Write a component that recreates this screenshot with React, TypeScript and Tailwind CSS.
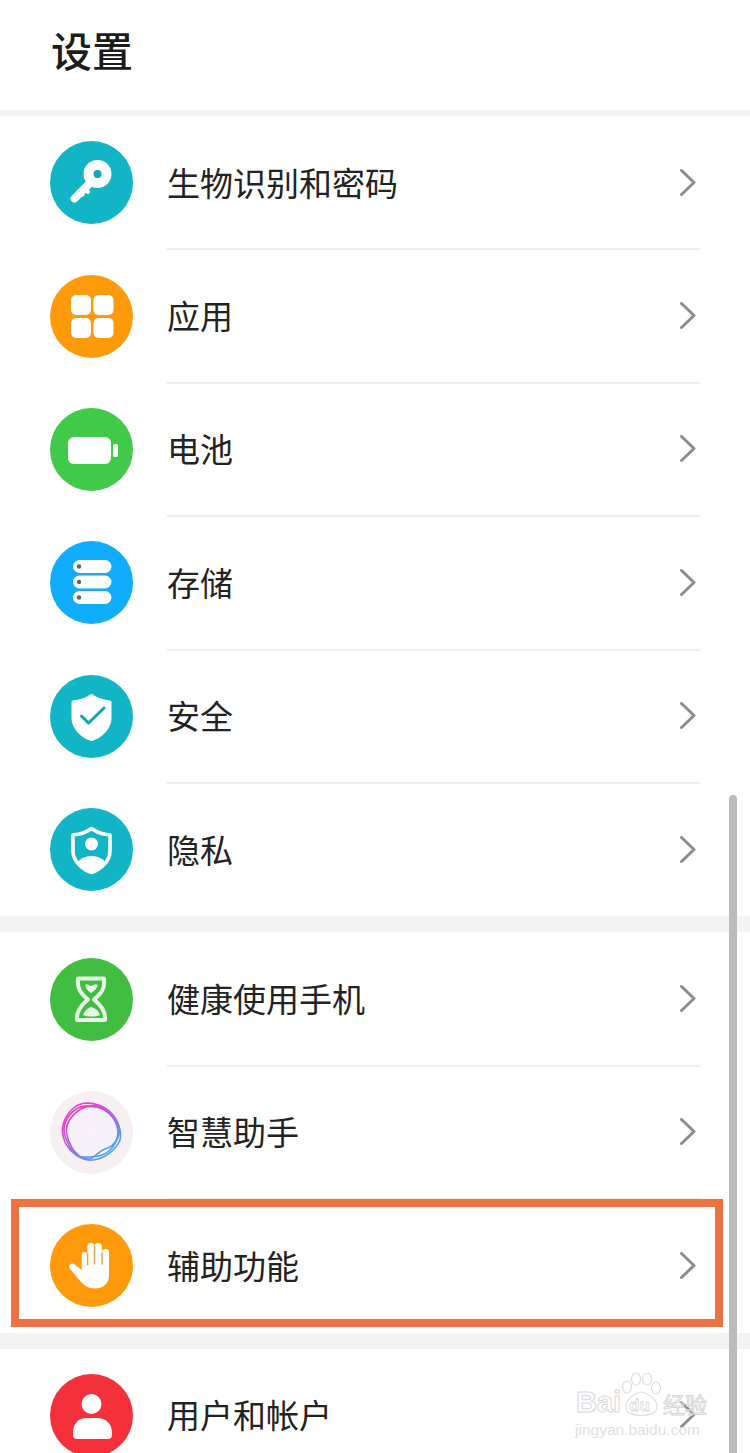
import React from "react";

const W = "#ffffff";

function Circle({ color, children }: { color: string; children?: React.ReactNode }) {
  return (
    <svg width="83" height="83" viewBox="0 0 83 83" className="shrink-0 block">
      <circle cx="41.5" cy="41.5" r="41.5" fill={color} />
      {children}
    </svg>
  );
}

const KeyIcon = () => (
  <Circle color="#12B5C6">
    <circle cx="47.5" cy="33" r="14" fill={W} />
    <circle cx="47.5" cy="33" r="4" fill="#12A5B5" />
    <path d="M40 42 L24.5 57.5" stroke={W} strokeWidth="8" strokeLinecap="round" />
    <path d="M33 46 l5 5 M29 50 l3.5 3.5" stroke={W} strokeWidth="4" strokeLinecap="round" />
  </Circle>
);

const AppsIcon = () => (
  <Circle color="#FF9A0A">
    <rect x="21" y="20" width="20" height="20" rx="5" fill={W} />
    <rect x="43.5" y="20" width="20" height="20" rx="5" fill={W} />
    <rect x="21" y="43" width="20" height="20" rx="5" fill={W} />
    <rect x="43.5" y="43" width="20" height="20" rx="5" fill={W} />
  </Circle>
);

const BatteryIcon = () => (
  <Circle color="#41C94A">
    <rect x="18" y="29" width="43" height="27" rx="6" fill={W} />
    <rect x="63" y="36" width="5" height="13" rx="1.5" fill={W} />
  </Circle>
);

const StorageIcon = () => (
  <Circle color="#0FADFB">
    {[19, 34.5, 50].map((y) => (
      <g key={y}>
        <rect x="23" y={y} width="38.5" height="13" rx="6.5" fill={W} />
        <circle cx="29" cy={y + 6.5} r="2.2" fill="#4D6B80" />
      </g>
    ))}
  </Circle>
);

const shield = "M41.5 20.5 C47 24.5 53 26.5 60 27 L60 43 C60 53 51 61.5 41.5 64.5 C32 61.5 23 53 23 43 L23 27 C30 26.5 36 24.5 41.5 20.5 Z";

const ShieldCheckIcon = () => (
  <Circle color="#12B5C6">
    <path d={shield} fill={W} stroke={W} strokeWidth="3" strokeLinejoin="round" />
    <path d="M31.5 41 L38.5 48 L54 33" fill="none" stroke="#12A5B5" strokeWidth="3" strokeLinecap="round" strokeLinejoin="round" />
  </Circle>
);

const PrivacyIcon = () => (
  <Circle color="#12B5C6">
    <defs>
      <clipPath id="privacy-shield">
        <path d={shield} />
      </clipPath>
    </defs>
    <circle cx="41.5" cy="36" r="6.5" fill={W} />
    <g clipPath="url(#privacy-shield)">
      <ellipse cx="41.5" cy="60" rx="16" ry="12" fill={W} />
    </g>
    <path d={shield} fill="none" stroke={W} strokeWidth="3.6" strokeLinejoin="round" />
  </Circle>
);

const HourglassIcon = () => (
  <Circle color="#41BE41">
    <path
      d="M28 20.5 H54 C55 30 52 35 44 41.5 C52 48 56 54 55 62 H27 C26 54 30 48 38 41.5 C30 35 27 30 28 20.5 Z"
      fill="none"
      stroke="#E6F8E4"
      strokeWidth="4"
      strokeLinejoin="round"
    />
    <path d="M35 27 C38 25 39 28 41 28 C43 28 45 25 48 27 C47 31 44 33 41 35 C38 33 36 31 35 27 Z" fill="#E6F8E4" />
    <path d="M33 57 C35 52 38 50 41 49 C45 50 48 52 50 57 C45 59 38 59 33 57 Z" fill="#E6F8E4" />
  </Circle>
);

const AssistantIcon = () => (
  <Circle color="#F6F0F3">
    <defs>
      <linearGradient id="ring" x1="0.2" y1="0.1" x2="0.8" y2="0.9">
        <stop offset="0" stopColor="#F03BC4" />
        <stop offset="0.5" stopColor="#A764E6" />
        <stop offset="1" stopColor="#45A5F5" />
      </linearGradient>
      <radialGradient id="core">
        <stop offset="0" stopColor="#FCEFFB" />
        <stop offset="1" stopColor="#F3F2FC" />
      </radialGradient>
    </defs>
    <circle cx="42" cy="41" r="26" fill="url(#core)" />
    <g fill="none" stroke="url(#ring)" strokeWidth="1.6">
      <path d="M12.5 37 C14 27 22 14 33 12.5 C43 11 55 15 61 22 C68 29 72 40 70 49 C66 59 54 68 43 69 C32 70 20 62 15 51 C13 46 12 42 12.5 37 Z" />
      <path d="M15 32 C20 21 28 14 40 15 C50 13 64 21 68 33 C72 43 66 55 55 58 C49 60 47 65 40 68 C29 68 21 61 18 52 C14 45 13 38 15 32 Z" />
      <path d="M16.5 42 C15 31 25 19 36 16 C49 13 60 21 65 30 C71 41 67 52 60 59 C52 67 41 66 31 66 C24 62 18 52 16.5 42 Z" />
    </g>
  </Circle>
);

const HandIcon = () => (
  <Circle color="#FF9A0A">
    <path
      d="M31.7 31 C31.7 27 37.4 27 37.4 31 V21.5 C37.4 18 44.4 18 44.4 21.5 V21.5 C44.4 18 51.8 18 51.8 21.5 V28 C51.8 24 59 24 59 28 V52 C59 60 52 64.5 45 64.5 C37 64.5 32.5 60 29 55.5 L20 45 C17.5 41.5 21 38 24 40 L31.7 46 Z"
      fill={W}
    />
    <path d="M37.6 30 V41 M44.5 22 V40 M52 29 V40" stroke="#E8A44A" strokeWidth="1.5" strokeLinecap="round" />
  </Circle>
);

const UserIcon = () => (
  <Circle color="#F4303A">
    <circle cx="41.5" cy="30" r="10" fill={W} />
    <path d="M37 44 H47 C56 44 62 50 62 59 V61 C62 63.5 60.5 65 58 65 H27 C24.5 65 23 63.5 23 61 V59 C23 50 28 44 37 44 Z" fill={W} />
  </Circle>
);

type RowData = { label: string; icon: React.ReactNode; line?: boolean };

const sections: RowData[][] = [
  [
    { label: "生物识别和密码", icon: <KeyIcon />, line: true },
    { label: "应用", icon: <AppsIcon />, line: true },
    { label: "电池", icon: <BatteryIcon />, line: true },
    { label: "存储", icon: <StorageIcon />, line: true },
    { label: "安全", icon: <ShieldCheckIcon />, line: true },
    { label: "隐私", icon: <PrivacyIcon /> },
  ],
  [
    { label: "健康使用手机", icon: <HourglassIcon />, line: true },
    { label: "智慧助手", icon: <AssistantIcon />, line: true },
    { label: "辅助功能", icon: <HandIcon /> },
  ],
  [{ label: "用户和帐户", icon: <UserIcon /> }],
];

function Chevron() {
  return (
    <svg width="16" height="27" viewBox="0 0 16 27" className="shrink-0 block" fill="none">
      <path d="M1.5 1.5 L14 13.5 L1.5 25.5" stroke="#8C8C8C" strokeWidth="3" strokeLinecap="round" strokeLinejoin="round" />
    </svg>
  );
}

function Row({ label, icon, line }: RowData) {
  return (
    <div className="flex h-[133.4px] shrink-0 items-start pl-[50px] pr-[50px]">
      <div className="flex h-full items-center">{icon}</div>
      <div
        className={
          "ml-[34px] flex h-[134.4px] flex-1 items-center justify-between pr-[4px] " +
          (line ? "border-b-2 border-[#EDEDED]" : "border-b-2 border-transparent")
        }
      >
        <span className="text-[33px] leading-none text-[#222222]">{label}</span>
        <Chevron />
      </div>
    </div>
  );
}

export default function App() {
  return (
    <div className="relative h-[1453px] w-[750px] overflow-hidden bg-white font-['Noto_Sans_CJK_SC','Noto_Sans',sans-serif]">
      <header className="flex h-[110px] items-center pb-[12px] pl-[51px]">
        <h1 className="text-[41px] leading-none font-medium text-[#1c1c1c]">设置</h1>
      </header>
      {sections.map((rows, i) => (
        <section key={i} className={i === 0 ? "border-t-[6px] border-[#F3F3F3]" : "border-t-[16px] border-[#F3F3F3]"}>
          {rows.map((r) => (
            <Row key={r.label} {...r} />
          ))}
        </section>
      ))}

      <div className="absolute left-[11px] top-[1199px] h-[128px] w-[712px] border-[8px] border-[#F07243]" />
      <div className="absolute left-[729px] top-[795px] bottom-0 w-[8px] rounded-t-[4px] bg-[#BBBBBB]" />

      <div className="absolute left-[575px] top-[1372px] h-[64px] w-[140px]">
        <svg width="42" height="46" viewBox="0 0 42 46" className="absolute left-[46px] top-0" fill="none" stroke="#DDDDDD" strokeWidth="1.2">
          <ellipse cx="6" cy="15" rx="4.5" ry="6" />
          <ellipse cx="15" cy="7" rx="4.5" ry="6" />
          <ellipse cx="26" cy="7" rx="4.5" ry="6" />
          <ellipse cx="35" cy="16" rx="4.5" ry="6" />
          <path d="M5 36 C4 28 13 21 20 20 C28 21 37 28 36 36 C35 46 6 46 5 36 Z" />
        </svg>
        <div className="absolute left-[54px] top-[24px] font-['Liberation_Sans',sans-serif] text-[17px] leading-[20px] font-bold text-transparent [-webkit-text-stroke:0.8px_#D8D8D8]">du</div>
        <div className="absolute left-[1px] top-[15px] font-['Liberation_Sans',sans-serif] text-[29px] leading-[30px] font-bold text-transparent [-webkit-text-stroke:1px_#D8D8D8]">Bai</div>
        <div className="absolute left-[88px] top-[18px] text-[22px] leading-[26px] text-transparent [-webkit-text-stroke:1px_#D8D8D8]">经验</div>
        <div className="absolute left-0 top-[50px] font-['Liberation_Sans',sans-serif] text-[15.5px] leading-[15px] text-[#E0E0E0]">jingyan.baidu.com</div>
      </div>
    </div>
  );
}
